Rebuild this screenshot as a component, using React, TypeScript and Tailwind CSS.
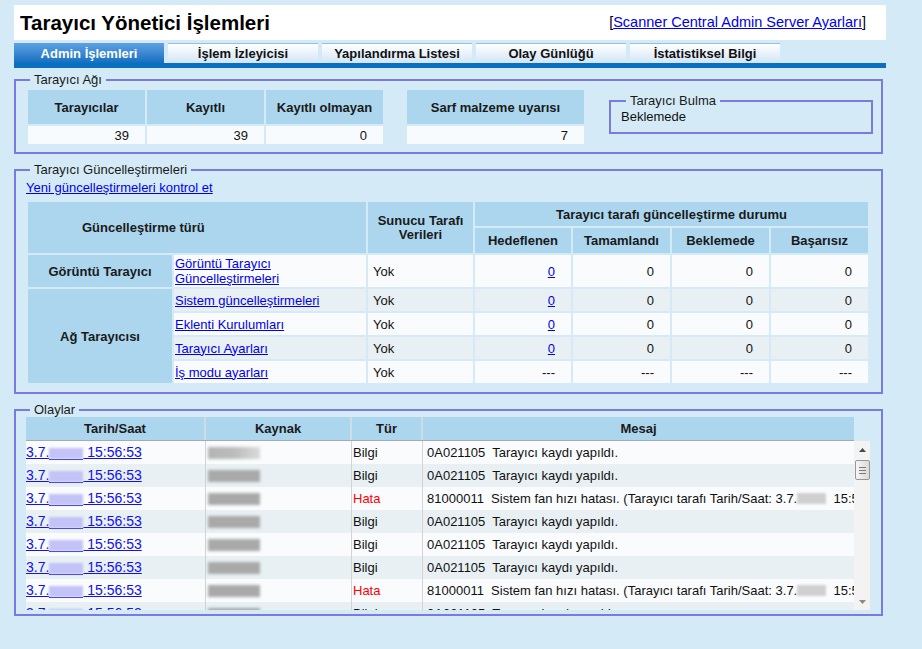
import React from "react";

const tabs = ["Admin İşlemleri", "İşlem İzleyicisi", "Yapılandırma Listesi", "Olay Günlüğü", "İstatistiksel Bilgi"];

const netHeads = ["Tarayıcılar", "Kayıtlı", "Kayıtlı olmayan"];
const netValues = ["39", "39", "0"];

interface UpdateRow {
  label: string;
  server: string;
  counts: string[];
  targetLink: boolean;
}

const netRows: UpdateRow[] = [
  { label: "Sistem güncelleştirmeleri", server: "Yok", counts: ["0", "0", "0", "0"], targetLink: true },
  { label: "Eklenti Kurulumları", server: "Yok", counts: ["0", "0", "0", "0"], targetLink: true },
  { label: "Tarayıcı Ayarları", server: "Yok", counts: ["0", "0", "0", "0"], targetLink: true },
  { label: "İş modu ayarları", server: "Yok", counts: ["---", "---", "---", "---"], targetLink: false },
];

const events = ["Bilgi", "Bilgi", "Hata", "Bilgi", "Bilgi", "Bilgi", "Hata", "Bilgi"];

function Section({ title, className = "", children }: { title: string; className?: string; children: React.ReactNode }) {
  return (
    <fieldset className={`w-[869px] border-2 border-[#7b7bde] ${className}`}>
      <legend className="ml-[14px] px-[4px] leading-[15px] text-[#1a1a1a]">{title}</legend>
      {children}
    </fieldset>
  );
}

function DateLink() {
  return (
    <a className="cursor-pointer whitespace-nowrap text-[14px] text-[#1010f0] underline">
      3.7.
      <span className="relative inline-block h-[13px] w-[34px] border-b border-[#1010f0] align-[-3px]">
        <span className="absolute inset-x-0 top-[1px] h-[11px] bg-[#c3c3f8] blur-[1px]" />
      </span>
      {" 15:56:53"}
    </a>
  );
}

function Scrollbar() {
  return (
    <div className="flex h-[169px] w-[16px] flex-col items-center bg-[#f3f3f3]">
      <div className="flex h-[17px] w-full items-center justify-center">
        <svg width="7" height="4" viewBox="0 0 7 4">
          <path d="M0 4 L3.5 0 L7 4 Z" fill="#4a4a4a" />
        </svg>
      </div>
      <div className="mt-[2px] flex h-[20px] w-[15px] flex-col items-center justify-center gap-[2px] rounded-[2px] border border-[#979797] bg-linear-to-r from-[#f6f6f6] to-[#dadada]">
        <div className="h-px w-[7px] bg-[#7a7a7a]" />
        <div className="h-px w-[7px] bg-[#7a7a7a]" />
        <div className="h-px w-[7px] bg-[#7a7a7a]" />
      </div>
      <div className="flex-1" />
      <div className="flex h-[17px] w-full items-center justify-center">
        <svg width="7" height="4" viewBox="0 0 7 4">
          <path d="M0 0 L3.5 4 L7 0 Z" fill="#8a8a8a" />
        </svg>
      </div>
    </div>
  );
}

export default function App() {
  const head = "bg-[#acd6ee] font-bold text-[#1a1a1a] text-center";

  return (
    <div className="min-h-[649px] w-full bg-[#d4ebf7] pl-[14px] pt-[5px] font-['Liberation_Sans',Arial,sans-serif] text-[13px] leading-[15px] text-[#111]">
      <div className="w-[872px]">
        {/* title bar */}
        <div className="flex h-[35px] items-center justify-between bg-white pl-[6px] pr-[20px]">
          <h1 className="text-[20.5px] font-bold leading-[24px] text-black">Tarayıcı Yönetici İşlemleri</h1>
          <span className="text-[14.5px] leading-[17px] text-black">
            [<a className="cursor-pointer text-[#0000ee] underline">Scanner Central Admin Server Ayarları</a>]
          </span>
        </div>

        {/* tabs */}
        <div className="mt-[3px] flex h-[20px] gap-[4px]">
          {tabs.map((t, i) =>
            i === 0 ? (
              <div key={t} className="flex w-[150px] items-center justify-center bg-linear-to-b from-[#5ea2e3] to-[#0d6fc0] font-bold text-white">
                {t}
              </div>
            ) : (
              <div key={t} className="flex w-[150px] items-center justify-center border-t border-[#8ec3ee] bg-linear-to-b from-white to-[#d2e5f6] font-bold text-[#111]">
                {t}
              </div>
            )
          )}
        </div>
        <div className="h-[5px] bg-[#0b6fbf]" />
      </div>

      {/* Tarayıcı Ağı */}
      <Section title="Tarayıcı Ağı" className="mt-[4px]">
        <div className="flex items-start pb-[8px] pl-[12px] pt-[3px]">
          <div className="grid grid-cols-[117px_117px_117px] gap-[2px]">
            {netHeads.map((h) => (
              <div key={h} className={`flex h-[34px] items-center justify-center ${head}`}>
                {h}
              </div>
            ))}
            {netValues.map((v, i) => (
              <div key={i} className="flex h-[18px] items-center justify-end bg-[#f8fbfd] pr-[16px]">
                {v}
              </div>
            ))}
          </div>
          <div className="ml-[24px] flex w-[177px] flex-col gap-[2px]">
            <div className={`flex h-[34px] items-center justify-center ${head}`}>Sarf malzeme uyarısı</div>
            <div className="flex h-[18px] items-center justify-end bg-[#f8fbfd] pr-[16px]">7</div>
          </div>
          <fieldset className="ml-[25px] mt-[3px] w-[264px] border-2 border-[#7b7bde]">
            <legend className="ml-[15px] px-[4px] leading-[15px] text-[#1a1a1a]">Tarayıcı Bulma</legend>
            <div className="pb-[8px] pl-[10px] pt-[1px]">Beklemede</div>
          </fieldset>
        </div>
      </Section>

      {/* Tarayıcı Güncelleştirmeleri */}
      <Section title="Tarayıcı Güncelleştirmeleri" className="mt-[8px]">
        <div className="pb-[7px] pl-[10px] pt-[3px]">
          <a className="cursor-pointer text-[#0000ee] underline">Yeni güncelleştirmeleri kontrol et</a>
          <table className="mt-[5px] w-[844px] table-fixed border-separate border-spacing-[2px]">
            <colgroup>
              <col className="w-[144px]" />
              <col className="w-[192px]" />
              <col className="w-[105px]" />
              <col className="w-[96px]" />
              <col className="w-[97px]" />
              <col className="w-[97px]" />
              <col className="w-[97px]" />
            </colgroup>
            <thead>
              <tr>
                <th colSpan={2} rowSpan={2} className="bg-[#acd6ee] pl-[54px] text-left font-bold text-[#1a1a1a]">
                  Güncelleştirme türü
                </th>
                <th rowSpan={2} className={`${head} leading-[14px]`}>
                  Sunucu Tarafı
                  <br />
                  Verileri
                </th>
                <th colSpan={4} className={`h-[24px] ${head}`}>
                  Tarayıcı tarafı güncelleştirme durumu
                </th>
              </tr>
              <tr>
                {["Hedeflenen", "Tamamlandı", "Beklemede", "Başarısız"].map((h) => (
                  <th key={h} className={`h-[25px] ${head}`}>
                    {h}
                  </th>
                ))}
              </tr>
            </thead>
            <tbody>
              <tr className="bg-[#f9fbfd]">
                <th className={`h-[32px] ${head}`}>Görüntü Tarayıcı</th>
                <td className="pl-[1px]">
                  <a className="cursor-pointer text-[#0000ee] underline">Görüntü Tarayıcı Güncelleştirmeleri</a>
                </td>
                <td className="pl-[5px]">Yok</td>
                <td className="pr-[16px] text-right">
                  <a className="cursor-pointer text-[#0000ee] underline">0</a>
                </td>
                <td className="pr-[16px] text-right">0</td>
                <td className="pr-[16px] text-right">0</td>
                <td className="pr-[16px] text-right">0</td>
              </tr>
              {netRows.map((r, i) => (
                <tr key={r.label} className={i % 2 === 0 ? "bg-[#e8f0f4]" : "bg-[#f9fbfd]"}>
                  {i === 0 && (
                    <th rowSpan={4} className={head}>
                      Ağ Tarayıcısı
                    </th>
                  )}
                  <td className="h-[22px] pl-[1px]">
                    <a className="cursor-pointer text-[#0000ee] underline">{r.label}</a>
                  </td>
                  <td className="pl-[5px]">{r.server}</td>
                  {r.counts.map((c, j) => (
                    <td key={j} className="pr-[16px] text-right">
                      {j === 0 && r.targetLink ? <a className="cursor-pointer text-[#0000ee] underline">{c}</a> : c}
                    </td>
                  ))}
                </tr>
              ))}
            </tbody>
          </table>
        </div>
      </Section>

      {/* Olaylar */}
      <Section title="Olaylar" className="mt-[8px]">
        <div className="pb-[4px] pl-[10px]">
          <div className="grid h-[24px] w-[828px] grid-cols-[180px_146px_71px_431px] border-b border-[#a3acb3] bg-[#acd6ee] font-bold text-[#1a1a1a]">
            <div className="flex items-center justify-center border-r-2 border-[#cddde6]">Tarih/Saat</div>
            <div className="flex items-center justify-center border-r-2 border-[#cddde6]">Kaynak</div>
            <div className="flex items-center justify-center border-r-2 border-[#cddde6]">Tür</div>
            <div className="flex items-center justify-center">Mesaj</div>
          </div>
          <div className="flex">
            <div className="h-[169px] w-[828px] overflow-hidden">
              {events.map((type, i) => (
                <div
                  key={i}
                  className={`grid h-[23px] grid-cols-[180px_146px_71px_431px] ${i % 2 === 1 ? "bg-[#e8f0f4]" : "bg-[#f9fbfd]"}`}
                >
                  <div className="flex items-center overflow-hidden border-r border-[#d3d3d3]">
                    <DateLink />
                  </div>
                  <div className="flex items-center border-r border-[#d3d3d3] pl-[2px]">
                    <div
                      className={`h-[12px] w-[52px] blur-[1.5px] ${
                        i === 0 ? "bg-linear-to-r from-[#b4b4b4] via-[#bcbcbc] to-[#dadada]" : "bg-[#a9a9a9]"
                      }`}
                    />
                  </div>
                  <div className={`flex items-center border-r border-[#d3d3d3] pl-[1px] ${type === "Hata" ? "text-[#ff0000]" : ""}`}>
                    {type}
                  </div>
                  <div className="flex items-center overflow-hidden whitespace-pre pl-[4px]">
                    {type === "Hata" ? (
                      <>
                        {"81000011  Sistem fan hızı hatası. (Tarayıcı tarafı Tarih/Saat: 3.7."}
                        <span className="inline-block h-[11px] w-[29px] shrink-0 bg-[#d0d0d0] blur-[1px]" />
                        {"  15:56:53)"}
                      </>
                    ) : (
                      "0A021105  Tarayıcı kaydı yapıldı."
                    )}
                  </div>
                </div>
              ))}
            </div>
            <Scrollbar />
          </div>
        </div>
      </Section>
    </div>
  );
}
